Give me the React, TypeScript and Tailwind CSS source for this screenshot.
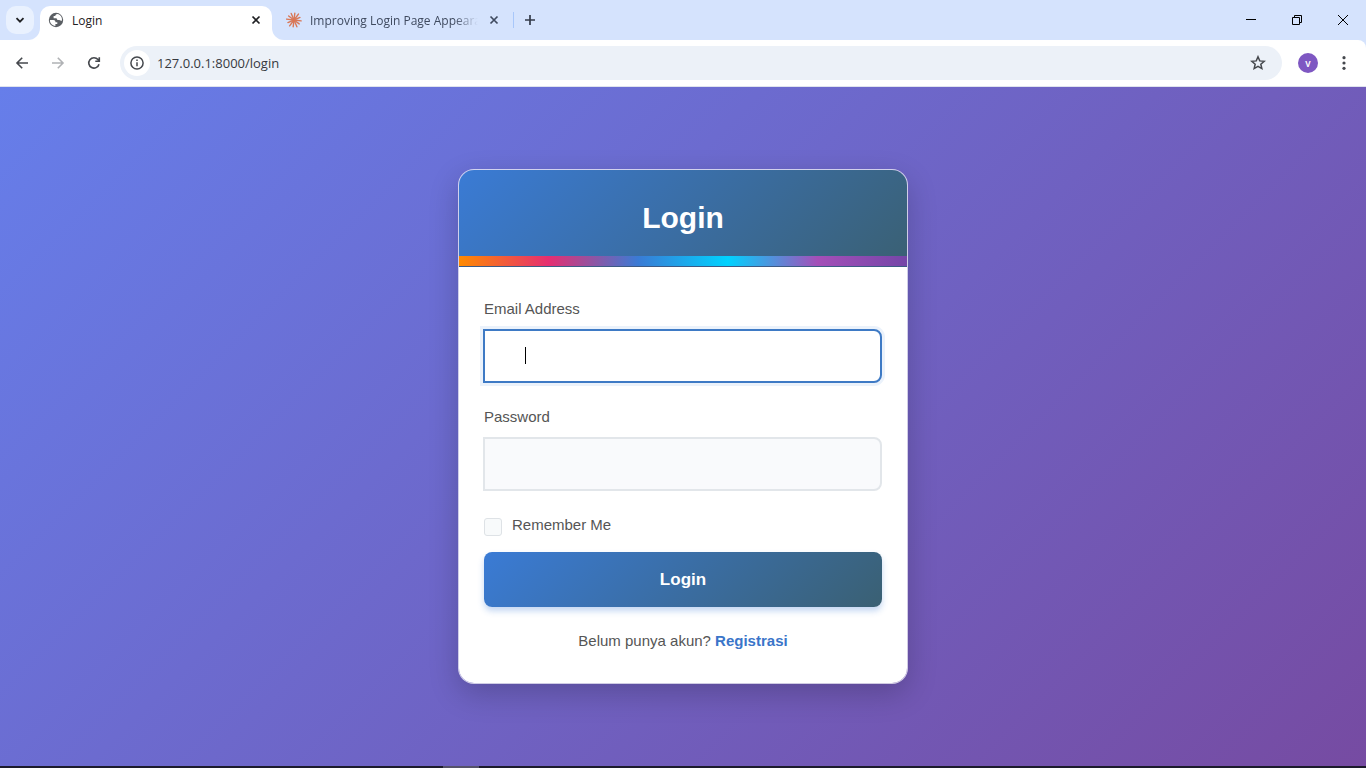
import React from "react";

type IconProps = { className?: string };

function Globe() {
  return (
    <svg viewBox="0 0 16 16" className="size-4 shrink-0" aria-hidden="true">
      <circle cx="8" cy="8" r="7.200" fill="#5b5f64" />
      <path d="M1.900 8.100H5.300C6.800 8.100 7.500 9 7.500 10.200H9.300V12H7.400V14C4.200 13.700 1.900 11.200 1.900 8.100Z" fill="#fff" />
      <path d="M9.400 2.100C8 2.400 7.300 3 7.300 4.100H5.600V6.200H7.500C8.700 6.200 9.300 6.800 9.300 7.900H11.200C12.300 7.900 12.600 8.800 13.900 8.800C14.500 5.400 12.500 2.700 9.400 2.100Z" fill="#fff" />
    </svg>
  );
}

function Burst() {
  const rays = [7.2, 6.5, 7.4, 6.8, 7.3, 6.6, 7.5, 6.7, 7.1, 6.8, 7.4, 6.5];
  return (
    <svg viewBox="0 0 16 16" className="size-4 shrink-0" aria-hidden="true" stroke="#d97757" strokeWidth="1.4" strokeLinecap="round">
      {rays.map((r, i) => {
        const a = (i * Math.PI) / 6 + 0.12;
        return <line key={i} x1="8" y1="8" x2={8 + r * Math.cos(a)} y2={8 + r * Math.sin(a)} />;
      })}
    </svg>
  );
}

function Cross({ className }: IconProps) {
  return (
    <svg viewBox="0 0 16 16" className={className} aria-hidden="true" fill="none" stroke="currentColor" strokeWidth="1.7">
      <path d="M4.500 4.500l7 7M11.500 4.500l-7 7" />
    </svg>
  );
}

function Back({ className }: IconProps) {
  return (
    <svg viewBox="0 0 16 16" className={className} aria-hidden="true" fill="none" stroke="currentColor" strokeWidth="1.600">
      <path d="M14 8H3.200M8.200 2.800L3 8l5.200 5.200" />
    </svg>
  );
}

function TabStrip() {
  return (
    <div className="flex h-10 items-stretch bg-[#d5e3fd] text-xs text-[#1f2023]">
      <div className="flex w-10 shrink-0 items-end bg-white">
        <div className="flex h-10 w-full justify-center rounded-br-xl bg-[#d5e3fd] pt-[6px]">
          <button aria-label="Search tabs" className="flex h-7 w-7 items-center justify-center rounded-[10px] bg-[#e9f1fe]">
            <svg viewBox="0 0 12 12" className="size-3" fill="none" stroke="#1f2023" strokeWidth="1.8"><path d="M2.500 4.200L6 7.700l3.500-3.500" /></svg>
          </button>
        </div>
      </div>
      <div className="flex w-[232px] shrink-0 bg-[#d5e3fd] pt-[6px]">
        <div className="flex flex-1 items-center rounded-t-[10px] bg-white px-2 pb-[6px]">
          <Globe />
          <span className="ml-2 flex-1 pt-[2px]">Login</span>
          <button aria-label="Close Login tab"><Cross className="size-4" /></button>
        </div>
      </div>
      <div className="flex w-[240px] shrink-0 bg-white">
        <div className="flex min-w-0 flex-1 items-center rounded-bl-xl bg-[#d5e3fd] pr-[10px] pl-[14px] text-[#3f4a5f]">
          <Burst />
          <span className="ml-2 min-w-0 flex-1 overflow-hidden pt-[2px] whitespace-nowrap [mask-image:linear-gradient(to_right,black_86%,transparent)]">Improving Login Page Appearance</span>
          <button aria-label="Close second tab" className="ml-2 shrink-0"><Cross className="size-4" /></button>
        </div>
      </div>
      <div className="flex flex-1 items-center">
        <span className="ml-px h-4 w-px bg-[#a8c7fa]" />
        <button aria-label="New tab" className="ml-2 text-[#333b49]">
          <svg viewBox="0 0 16 16" className="size-4" stroke="currentColor" strokeWidth="1.7"><path d="M8 3v10M3 8h10" /></svg>
        </button>
      </div>
      <div className="flex items-center text-black">
        <button aria-label="Minimize" className="flex w-[46px] justify-center"><svg viewBox="0 0 10 10" className="size-[10px]" stroke="currentColor"><path d="M0 4.500h10" /></svg></button>
        <button aria-label="Restore" className="flex w-[46px] justify-center"><svg viewBox="0 0 10 10" className="size-[10px]" fill="none" stroke="currentColor"><path d="M.5 2.500h7v7h-7zM2.500 2.500v-2h7v7h-2" /></svg></button>
        <button aria-label="Close" className="flex w-[46px] justify-center"><svg viewBox="0 0 10 10" className="size-[10px]" stroke="currentColor"><path d="M0 0l10 10M10 0L0 10" /></svg></button>
      </div>
    </div>
  );
}

function Toolbar() {
  return (
    <div className="bg-[#d5e3fd]">
      <div className="flex h-[47px] items-center rounded-tr-lg border-b border-[#dfe3ee] bg-white px-[14px] text-[#45484d]">
        <button aria-label="Back"><Back className="size-4" /></button>
        <button aria-label="Forward" className="ml-5 text-[#b0b2b5]"><Back className="size-4 rotate-180" /></button>
        <button aria-label="Reload" className="ml-5">
          <svg viewBox="0 0 16 16" className="size-4" fill="none" stroke="currentColor" strokeWidth="1.6"><path d="M13 9.200A5.200 5.200 0 1 1 12 4.600L13.200 5.900M13.300 2.200V6.200H9.300" /></svg>
        </button>
        <div className="ml-[18px] flex h-[34px] flex-1 items-center rounded-full bg-[#ecf1f8] pr-4 pl-1">
          <button aria-label="Site information" className="flex size-[26px] items-center justify-center rounded-full bg-white">
            <svg viewBox="0 0 16 16" className="size-4" fill="none" stroke="currentColor" strokeWidth="1.500"><circle cx="8" cy="8" r="6.100" /><path d="M8 7.200v4M8 4.600v1.500" /></svg>
          </button>
          <input aria-label="Address" defaultValue="127.0.0.1:8000/login" className="ml-[7px] min-w-0 flex-1 bg-transparent pt-[2px] text-[13px] text-[#36393e] outline-none" />
          <button aria-label="Bookmark">
            <svg viewBox="0 0 16 16" className="size-4" fill="none" stroke="currentColor" strokeWidth="1.500"><path d="M8 1.800l1.750 4.100 4.450.4-3.370 2.900 1 4.350L8 11.250l-3.830 2.300 1-4.350L1.800 6.300l4.450-.4z" /></svg>
          </button>
        </div>
        <button aria-label="Profile" className="ml-4 flex size-5 items-center justify-center rounded-full bg-[#7e57c2] text-[10px] font-semibold text-white">v</button>
        <button aria-label="Menu" className="ml-[18px]">
          <svg viewBox="0 0 16 16" className="size-4" fill="currentColor"><circle cx="8" cy="2.700" r="1.600" /><circle cx="8" cy="8" r="1.600" /><circle cx="8" cy="13.300" r="1.600" /></svg>
        </button>
      </div>
    </div>
  );
}

const fieldClass = "-ml-px block h-[54px] w-[calc(100%+1px)] rounded-r-lg border-2 px-10 text-base outline-none";

function LoginCard() {
  return (
    <section className="w-full max-w-[450px] overflow-hidden rounded-2xl border border-white/70 bg-white bg-clip-padding font-['Liberation_Sans',Arial,sans-serif] text-[15px] leading-5 text-[#555] shadow-[0_10px_30px_rgba(0,0,0,0.2)]">
      <header className="border-b border-[#3c5a85] bg-[linear-gradient(135deg,#3a7bd5,#3a6073)]">
        <h1 className="pt-[30px] pb-5 text-center text-[30px] leading-9 font-bold text-white">Login</h1>
        <div className="h-[10px] bg-[linear-gradient(90deg,#ff8a00,#e52e71_20%,#3a7bd5_40%,#00d2ff_60%,#a44fb8_80%,#7546a8)]" />
      </header>
      <form className="px-[25px] py-8" onSubmit={(e) => e.preventDefault()}>
        <label htmlFor="email" className="mb-[10px] block">Email Address</label>
        <div className="relative">
          <input id="email" type="email" className={`${fieldClass} border-[#3e7ac5] bg-white caret-transparent shadow-[0_0_0_3px_rgba(58,123,213,0.1)]`} />
          <span className="absolute top-[18px] left-[41px] h-[17px] w-px bg-black" aria-hidden="true" />
        </div>
        <label htmlFor="password" className="mt-6 mb-[10px] block">Password</label>
        <input id="password" type="password" className={`${fieldClass} border-[#e2e6ea] bg-[#f9fafc]`} />
        <div className="mt-6 flex items-start gap-[10px]">
          <input id="remember" type="checkbox" className="mt-[3px] size-[18px] appearance-none rounded-[3px] border border-[#dee2e6] bg-[#f8fafb]" />
          <label htmlFor="remember">Remember Me</label>
        </div>
        <button type="submit" className="mt-4 block h-[55px] w-full rounded-lg bg-[linear-gradient(135deg,#3a7bd5,#3a6073)] text-[17px] font-bold text-white shadow-[0_4px_6px_rgba(58,123,213,0.3)]">Login</button>
        <p className="mt-6 text-center">
          Belum punya akun? <a href="#registrasi" className="font-bold text-[#3a75c9]">Registrasi</a>
        </p>
      </form>
    </section>
  );
}

export default function App() {
  return (
    <div className="flex min-h-screen flex-col font-['Open_Sans','Noto_Sans',sans-serif]">
      <TabStrip />
      <Toolbar />
      <main className="flex flex-1 items-center justify-center bg-[linear-gradient(135deg,#667eea_0%,#764ba2_100%)]">
        <LoginCard />
      </main>
      <div className="flex h-[2px] bg-[#1c1b2c]">
        <span className="ml-[443px] w-9 bg-[#55526a]" />
      </div>
    </div>
  );
}
